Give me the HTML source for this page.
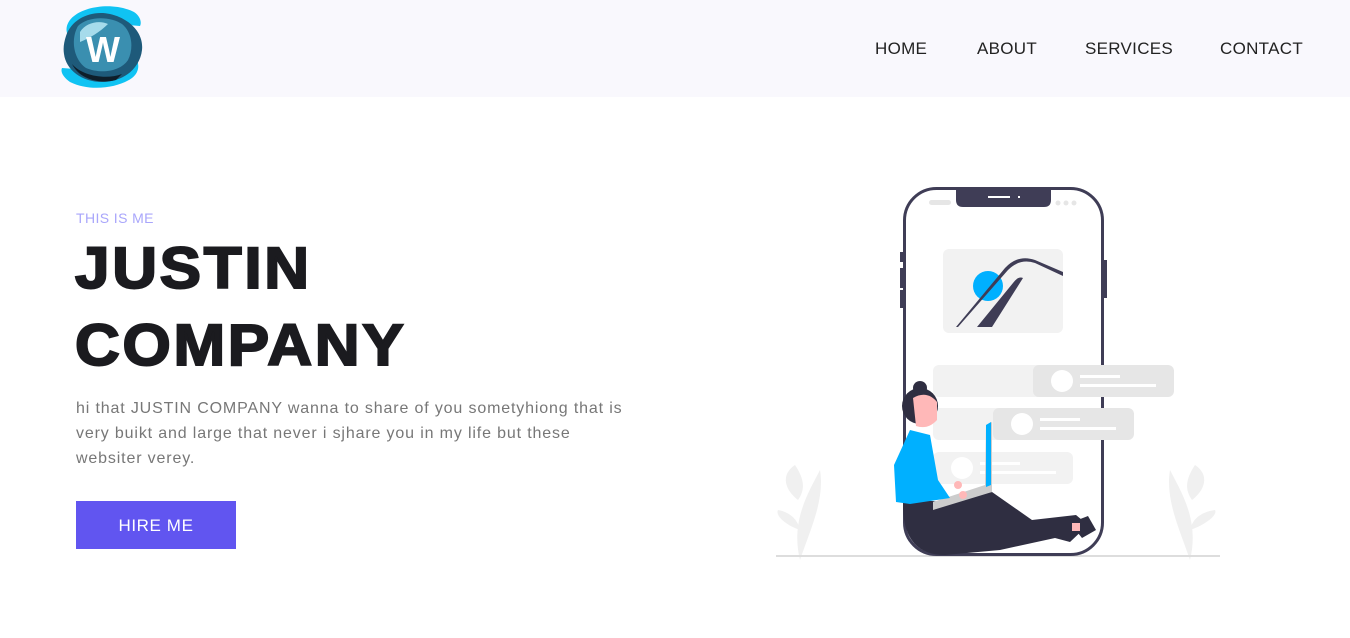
<!DOCTYPE html>
<html><head><meta charset="utf-8"><style>
*{margin:0;padding:0;box-sizing:border-box}
body{width:1350px;height:638px;background:#fff;font-family:"Liberation Sans",sans-serif;position:relative;overflow:hidden}
.hdr{position:absolute;left:0;top:0;width:1350px;height:97px;background:#f9f8fd}
.nav{position:absolute;top:39px;font-size:17px;color:#222;letter-spacing:.3px}
.small{position:absolute;left:76px;top:210px;font-size:14px;color:#a9a6fb;letter-spacing:.4px}
.title{position:absolute;left:75px;top:230px;font-size:58px;line-height:77px;font-weight:900;color:#1b1b1f;letter-spacing:2.5px;-webkit-text-stroke:2px #1b1b1f;transform:scaleX(1.07);transform-origin:left top}
.para{position:absolute;left:76px;top:396px;font-size:16px;line-height:25px;color:#777;white-space:nowrap;letter-spacing:.85px}
.btn{position:absolute;left:76px;top:501px;width:160px;height:48px;background:#6155f0;color:#fff;font-size:17px;text-align:center;line-height:49px;letter-spacing:.6px}
</style></head><body>
<div class="hdr"></div>
<svg style="position:absolute;left:56px;top:2px" width="92" height="90" viewBox="0 0 92 90">
<path d="M18 14 C30 4 58 0 78 10 C84 14 86 20 84 24 L60 22 C40 20 20 26 14 36 C8 30 10 20 18 14Z" fill="#10c3f3"/>
<path d="M76 76 C62 86 34 90 14 80 C8 76 4 70 6 66 L32 68 C52 70 72 64 78 54 C84 60 84 70 76 76Z" fill="#10c3f3"/>
<path d="M10 34 C16 16 36 8 54 12 C72 16 88 30 86 48 C84 66 68 80 46 80 C26 80 10 68 8 52 C7 46 8 40 10 34Z" fill="#1e5a7a"/>
<path d="M22 24 C32 14 54 14 66 22 C76 30 78 46 72 58 C64 70 44 72 30 66 C18 58 14 38 22 24Z" fill="#3a8fb0"/>
<path d="M24 30 C30 20 44 18 52 22 C44 30 34 36 24 40Z" fill="#a6dbeb"/>
<path d="M16 62 C26 74 50 78 66 72 L60 78 C44 82 24 78 16 62Z" fill="#0e1e2a"/>
<text x="47" y="60" font-family="Liberation Sans" font-weight="900" font-size="36" fill="#fff" text-anchor="middle">W</text>
</svg>
<div class="nav" style="left:875px">HOME</div>
<div class="nav" style="left:977px">ABOUT</div>
<div class="nav" style="left:1085px">SERVICES</div>
<div class="nav" style="left:1220px">CONTACT</div>

<div class="small">THIS IS ME</div>
<div class="title">JUSTIN<br>COMPANY</div>
<div class="para">hi that JUSTIN COMPANY wanna to share of you sometyhiong that is<br>very buikt and large that never i sjhare you in my life but these<br>websiter verey.</div>
<div class="btn">HIRE ME</div>

<svg style="position:absolute;left:770px;top:180px" width="460" height="385" viewBox="0 0 460 385">
<g fill="#f0f0f0">
<path d="M30 380 C20 340 40 310 50 290 C55 320 40 350 30 380Z"/>
<path d="M28 320 C15 310 10 295 25 285 C35 300 35 310 28 320Z"/>
<path d="M30 350 C15 345 5 335 8 330 C20 332 28 340 30 350Z"/>
<path d="M420 380 C430 340 410 310 400 290 C395 320 410 350 420 380Z"/>
<path d="M422 320 C435 310 440 295 425 285 C415 300 415 310 422 320Z"/>
<path d="M420 350 C435 345 448 335 445 330 C430 332 422 340 420 350Z"/>
</g>
<line x1="6" y1="376" x2="450" y2="376" stroke="#ddd" stroke-width="2"/>
<rect x="134.5" y="8.5" width="198" height="366" rx="32" fill="#fff" stroke="#3f3d56" stroke-width="3"/>
<rect x="130" y="72" width="4" height="10" fill="#3f3d56"/>
<rect x="130" y="88" width="4" height="20" fill="#3f3d56"/>
<rect x="130" y="110" width="4" height="18" fill="#3f3d56"/>
<rect x="333" y="80" width="4" height="38" fill="#3f3d56"/>
<path d="M186 8 H281 V20 Q281 27 274 27 H193 Q186 27 186 20Z" fill="#3f3d56"/>
<rect x="218" y="16" width="22" height="2" fill="#fff"/><rect x="248" y="16" width="2" height="2" fill="#fff"/>
<rect x="159" y="20" width="22" height="5" rx="2.5" fill="#e6e6e6"/>
<circle cx="288" cy="23" r="2.5" fill="#e6e6e6"/><circle cx="296" cy="23" r="2.5" fill="#e6e6e6"/><circle cx="304" cy="23" r="2.5" fill="#e6e6e6"/>
<rect x="173" y="69" width="120" height="84" rx="6" fill="#f2f2f2"/>
<circle cx="218" cy="106" r="15" fill="#00b0ff"/>
<path d="M188 147 L238 90 Q250 78 265 83 L293 96 V92 L265 80 Q248 74 235 88 L186 147Z" fill="#3f3d56"/>
<path d="M207 147 L243 103 Q248 96 253 98 L222 147Z" fill="#3f3d56"/>
<rect x="163" y="185" width="110" height="32" rx="6" fill="#f2f2f2"/>
<rect x="263" y="185" width="141" height="32" rx="6" fill="#e6e6e6"/>
<circle cx="292" cy="201" r="11" fill="#fff"/><rect x="310" y="195" width="40" height="3" fill="#fff"/><rect x="310" y="204" width="76" height="3" fill="#fff"/>
<rect x="163" y="228" width="70" height="32" rx="6" fill="#f2f2f2"/>
<rect x="223" y="228" width="141" height="32" rx="6" fill="#e6e6e6"/>
<circle cx="252" cy="244" r="11" fill="#fff"/><rect x="270" y="238" width="40" height="3" fill="#fff"/><rect x="270" y="247" width="76" height="3" fill="#fff"/>
<rect x="163" y="272" width="140" height="32" rx="6" fill="#f2f2f2"/>
<circle cx="192" cy="288" r="11" fill="#fff"/><rect x="210" y="282" width="40" height="3" fill="#fff"/><rect x="210" y="291" width="76" height="3" fill="#fff"/>
<path d="M133 325 Q133 375 175 375 L230 370 L285 358 L300 362 L318 345 L306 335 L262 340 L222 312 L172 322 L133 318Z" fill="#2f2e41"/>
<path d="M300 343 L318 336 L326 350 L312 358Z" fill="#2f2e41"/>
<rect x="302" y="343" width="8" height="8" fill="#ffb8b8"/>
<path d="M163 330 L222 312 L222 242 L216 245 L215 305 L163 322Z" fill="#ccc"/>
<path d="M216 245 L221 242 L221 305 L216 307Z" fill="#00b0ff"/>
<circle cx="150" cy="226" r="18" fill="#2f2e41"/>
<circle cx="150" cy="208" r="7" fill="#2f2e41"/>
<path d="M143 218 Q157 210 167 222 L167 240 Q158 250 146 246 Z" fill="#ffb8b8"/>
<path d="M140 250 L160 255 L168 300 L180 318 L140 324 L126 322 L124 285 Z" fill="#00b0ff"/>
<circle cx="188" cy="305" r="4" fill="#ffb8b8"/><circle cx="193" cy="315" r="4" fill="#ffb8b8"/>
</svg>
</body></html>
